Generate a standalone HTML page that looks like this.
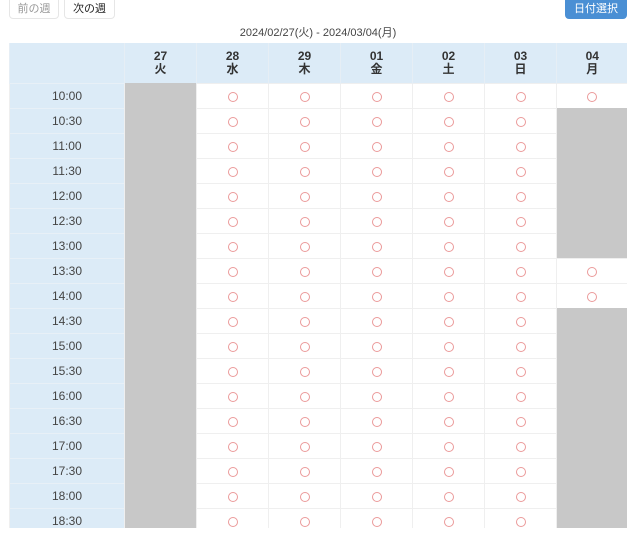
<!DOCTYPE html><html><head><meta charset="utf-8"><style>
body{margin:0;background:#fff;font-family:"Liberation Sans","Noto Sans CJK JP",sans-serif;color:#333;width:636px;height:548px;overflow:hidden;position:relative}
.btn{position:absolute;top:-6px;height:25px;border:1px solid #e6e6e6;border-radius:4px;font-size:11px;line-height:29px;text-align:center;background:#fff;box-sizing:border-box}
.range{position:absolute;top:24px;left:0;width:636px;text-align:center;font-size:11px;color:#444}
.wrap{position:absolute;left:9px;top:43px;width:618px;height:485px;overflow:hidden}
table{border-collapse:collapse;table-layout:fixed;width:618px}
th{background:#dcebf7;height:40px;font-size:12px;font-weight:bold;line-height:13px;border-left:1px solid #e6eef5;padding:0;color:#333}
td{height:24px;border-top:1px solid #efefef;border-left:1px solid #efefef;text-align:center;padding:0;font-size:12px}
td.t{background:#dcebf7;color:#444;border-top:1px solid #e8f0f7}
td.g{background:#c8c8c8;border-top-color:#c8c8c8}
.o{display:inline-block;width:8px;height:8px;border:1px solid #eb9a9a;border-radius:50%;vertical-align:middle}
</style></head><body>
<div class="btn" style="left:9px;width:50px;color:#999">前の週</div>
<div class="btn" style="left:64px;width:51px;color:#222">次の週</div>
<div class="btn" style="left:565px;width:62px;background:#4a8fd4;border-color:#4a8fd4;color:#fff">日付選択</div>
<div class="range">2024/02/27(火) - 2024/03/04(月)</div>
<div class="wrap"><table>
<colgroup><col style="width:115px"><col style="width:72px"><col style="width:72px"><col style="width:72px"><col style="width:72px"><col style="width:72px"><col style="width:72px"><col style="width:71px"></colgroup>
<tr><th></th><th>27<br>火</th><th>28<br>水</th><th>29<br>木</th><th>01<br>金</th><th>02<br>土</th><th>03<br>日</th><th>04<br>月</th></tr>
<script>
var times=["10:00","10:30","11:00","11:30","12:00","12:30","13:00","13:30","14:00","14:30","15:00","15:30","16:00","16:30","17:00","17:30","18:00","18:30"];
var ok=["10:00","13:30","14:00"];
times.forEach(function(t){var r='<tr><td class="t">'+t+'</td><td class="g"></td>';for(var i=0;i<5;i++)r+='<td><span class="o"></span></td>';r+=ok.indexOf(t)>=0?'<td><span class="o"></span></td>':'<td class="g"></td>';document.write(r+'</tr>');});
</script>
</table></div>
</body></html>
